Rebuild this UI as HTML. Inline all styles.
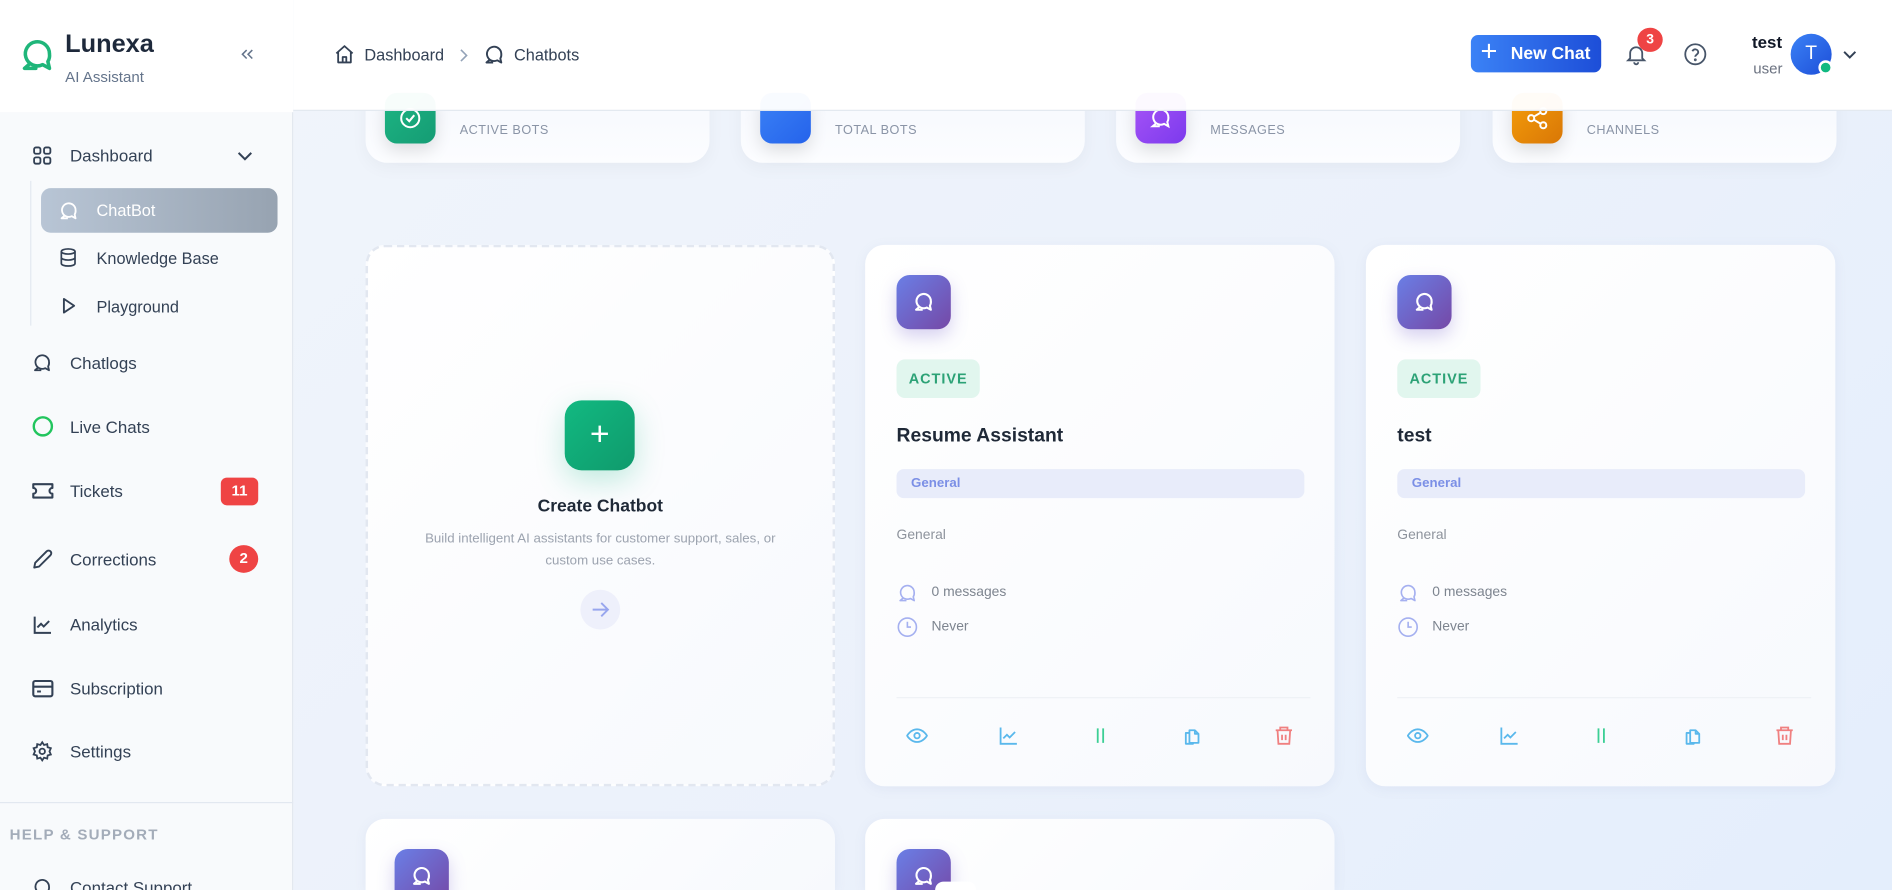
<!DOCTYPE html>
<html><head><meta charset="utf-8">
<style>
*{box-sizing:border-box;margin:0;padding:0}
html,body{width:1892px;height:890px;overflow:hidden;font-family:"Liberation Sans",sans-serif;background:#eef3fb}
#w{position:absolute;left:0;top:0;width:1568px;height:738px;transform:scale(1.20663,1.2060);transform-origin:0 0;background:linear-gradient(135deg,#f1f5fb 0%,#ebf1fb 60%,#e4eefc 100%);overflow:hidden}
.abs{position:absolute}
.sb{position:absolute;left:0;top:0;width:243px;height:738px;background:#f8fafc;border-right:1px solid #e3e8ef}
.sbh{position:absolute;left:0;top:0;width:243px;height:93px;background:#fff}
.txt{position:absolute;white-space:nowrap}
.hdr{position:absolute;left:243px;top:0;width:1325px;height:92px;background:rgba(255,255,255,.97);border-bottom:1px solid #e2e8f0;z-index:5}
.stat{position:absolute;top:50px;height:85px;width:285px;border-radius:18px;background:linear-gradient(180deg,#f3f6fd,#fcfdff);box-shadow:0 4px 14px rgba(0,0,0,.04)}
.sic{position:absolute;left:16px;top:27px;width:42px;height:42px;border-radius:10px;box-shadow:0 6px 14px rgba(0,0,0,.12)}
.slb{position:absolute;left:78px;top:52px;font-size:10.5px;color:#8a94a6;letter-spacing:.4px}
.card{position:absolute;width:389px;border-radius:16px;background:linear-gradient(135deg,#ffffff,#f7f9fd);box-shadow:0 2px 10px rgba(100,120,170,.08)}
.bic{position:absolute;left:26px;top:25px;width:45px;height:45px;border-radius:11px;background:linear-gradient(135deg,#6a7fe6,#7548a6);box-shadow:0 6px 14px rgba(110,90,200,.28)}
.act{position:absolute;left:26px;top:95px;width:69px;height:32px;border-radius:7px;background:#e1f6ee;color:#2ca276;font-size:12px;font-weight:bold;letter-spacing:.8px;text-align:center;line-height:32px}
.ttl{position:absolute;left:26px;top:150px;font-size:16px;font-weight:bold;color:#1f2937}
.tag{position:absolute;left:26px;top:186px;width:338px;height:24px;border-radius:6px;background:#e8ecfa;color:#7b8fe6;font-size:11px;font-weight:bold;line-height:24px;padding-left:12px}
.gd{position:absolute;left:26px;top:235px;font-size:11.5px;color:#8d939c}
.mr{position:absolute;left:26px;font-size:11.5px;color:#7d848f}
.dv{position:absolute;left:26px;right:20px;top:375px;height:1px;background:#eef1f6}
.ai{position:absolute;top:398px}
</style></head><body><div id="w">
<svg width="0" height="0" style="position:absolute"><defs><symbol id="cb" viewBox="0 0 24 24"><path d="M19.5 11a7.5 7.5 0 1 0-4.2 6.7l4.2 2.3-1-4.2A7.4 7.4 0 0 0 19.5 11z"/><path d="M7.5 17L4 20h7"/></symbol></defs></svg>

<!-- sidebar -->
<div class="sb"></div>
<div class="sbh"></div>
<svg class="abs" style="left:15px;top:30px" width="32" height="32" viewBox="0 0 24 24" fill="none" stroke="#1fb67a" stroke-width="2.2" stroke-linecap="round" stroke-linejoin="round"><use href="#cb"/></svg>
<div class="txt" style="left:54px;top:25px;font-size:21px;font-weight:bold;color:#1e293b">Lunexa</div>
<div class="txt" style="left:54px;top:57px;font-size:12.5px;color:#64748b">AI Assistant</div>
<svg class="abs" style="left:198px;top:38px" width="14" height="14" viewBox="0 0 24 24" fill="none" stroke="#64748b" stroke-width="2.2"><path d="M11 6l-6 6 6 6M19 6l-6 6 6 6"/></svg>

<svg class="abs" style="left:26px;top:120px" width="18" height="18" viewBox="0 0 24 24" fill="none" stroke="#334155" stroke-width="2"><rect x="3" y="3" width="7" height="7" rx="2"/><rect x="14" y="3" width="7" height="7" rx="2"/><rect x="3" y="14" width="7" height="7" rx="2"/><rect x="14" y="14" width="7" height="7" rx="2"/></svg>
<div class="txt" style="left:58px;top:121px;font-size:14px;color:#334155">Dashboard</div>
<svg class="abs" style="left:194px;top:120px" width="18" height="18" viewBox="0 0 24 24" fill="none" stroke="#334155" stroke-width="2.2"><path d="M5 9l7 7 7-7"/></svg>
<div class="abs" style="left:25px;top:150px;width:1px;height:120px;background:#e2e8f0"></div>
<div class="abs" style="left:34px;top:156px;width:196px;height:37px;border-radius:8px;background:linear-gradient(90deg,#b8c5d5,#97a3b1)"></div>
<svg class="abs" style="left:48px;top:166px" width="18" height="18" viewBox="0 0 24 24" fill="none" stroke="#fff" stroke-width="2" stroke-linejoin="round"><use href="#cb"/></svg>
<div class="txt" style="left:80px;top:167px;font-size:13.5px;color:#fff">ChatBot</div>
<svg class="abs" style="left:48px;top:205px" width="17" height="17" viewBox="0 0 24 24" fill="none" stroke="#334155" stroke-width="2"><ellipse cx="12" cy="5" rx="8" ry="3"/><path d="M4 5v14c0 1.7 3.6 3 8 3s8-1.3 8-3V5M4 12c0 1.7 3.6 3 8 3s8-1.3 8-3"/></svg>
<div class="txt" style="left:80px;top:207px;font-size:13.5px;color:#334155">Knowledge Base</div>
<svg class="abs" style="left:48px;top:245px" width="17" height="17" viewBox="0 0 24 24" fill="none" stroke="#334155" stroke-width="2.2" stroke-linejoin="round"><path d="M7 4l12 8-12 8z"/></svg>
<div class="txt" style="left:80px;top:247px;font-size:13.5px;color:#334155">Playground</div>

<svg class="abs" style="left:26px;top:292px" width="18" height="18" viewBox="0 0 24 24" fill="none" stroke="#334155" stroke-width="2" stroke-linejoin="round"><use href="#cb"/></svg>
<div class="txt" style="left:58px;top:293px;font-size:14px;color:#334155">Chatlogs</div>
<div class="abs" style="left:27px;top:345px;width:17px;height:17px;border:2px solid #22c55e;border-radius:50%"></div>
<div class="txt" style="left:58px;top:346px;font-size:14px;color:#334155">Live Chats</div>
<svg class="abs" style="left:26px;top:399px" width="19" height="16" viewBox="0 0 24 20" fill="none" stroke="#334155" stroke-width="2.2" stroke-linejoin="round"><path d="M2 3h20v4a3 3 0 0 0 0 6v4H2v-4a3 3 0 0 0 0-6z"/></svg>
<div class="txt" style="left:58px;top:399px;font-size:14px;color:#334155">Tickets</div>
<div class="abs" style="left:183px;top:396px;width:31px;height:23px;border-radius:5px;background:#ef4444;color:#fff;font-size:12.5px;font-weight:bold;text-align:center;line-height:23px">11</div>
<svg class="abs" style="left:26px;top:454px" width="19" height="19" viewBox="0 0 24 24" fill="none" stroke="#334155" stroke-width="2" stroke-linejoin="round"><path d="M3 21l1-5L16 4a2.8 2.8 0 0 1 4 4L8 20z"/></svg>
<div class="txt" style="left:58px;top:456px;font-size:14px;color:#334155">Corrections</div>
<div class="abs" style="left:190px;top:452px;width:24px;height:23px;border-radius:50%;background:#ef4444;color:#fff;font-size:12.5px;font-weight:bold;text-align:center;line-height:23px">2</div>
<svg class="abs" style="left:26px;top:509px" width="19" height="18" viewBox="0 0 24 24" fill="none" stroke="#334155" stroke-width="2.2"><path d="M3 3v18h18"/><path d="M6 15l4-4 3 3 6-6"/></svg>
<div class="txt" style="left:58px;top:510px;font-size:14px;color:#334155">Analytics</div>
<svg class="abs" style="left:26px;top:563px" width="19" height="16" viewBox="0 0 24 20" fill="none" stroke="#334155" stroke-width="2.2"><rect x="2" y="2" width="20" height="16" rx="2"/><path d="M2 8h20M6 13h4"/></svg>
<div class="txt" style="left:58px;top:563px;font-size:14px;color:#334155">Subscription</div>
<svg class="abs" style="left:26px;top:614px" width="18" height="18" viewBox="0 0 24 24" fill="none" stroke="#334155" stroke-width="2"><circle cx="12" cy="12" r="3"/><path d="M12 2l2 3 3.5-1 .5 3.5 3.5 1-1.5 3.5 1.5 3.5-3.5 1-.5 3.5-3.5-1-2 3-2-3-3.5 1-.5-3.5-3.5-1L4 12 2.5 8.5l3.5-1L6.5 4 10 5z"/></svg>
<div class="txt" style="left:58px;top:615px;font-size:14px;color:#334155">Settings</div>
<div class="abs" style="left:0;top:665px;width:243px;height:1px;background:#e2e8f0"></div>
<div class="txt" style="left:8px;top:685px;font-size:12.5px;font-weight:bold;color:#a3acb9;letter-spacing:1px">HELP &amp; SUPPORT</div>
<svg class="abs" style="left:26px;top:727px" width="18" height="18" viewBox="0 0 24 24" fill="none" stroke="#334155" stroke-width="2"><use href="#cb"/></svg>
<div class="txt" style="left:58px;top:728px;font-size:14px;color:#334155">Contact Support</div>

<!-- stat cards -->
<div class="stat" style="left:303px"><div class="sic" style="background:linear-gradient(135deg,#1db583,#159c74)"><svg style="position:absolute;left:11px;top:11px" width="20" height="20" viewBox="0 0 24 24" fill="none" stroke="#fff" stroke-width="2"><circle cx="12" cy="12" r="9"/><path d="M8 12l3 3 5-6"/></svg></div><div class="slb">ACTIVE BOTS</div></div>
<div class="stat" style="left:614px"><div class="sic" style="background:linear-gradient(135deg,#3b82f6,#2563eb)"></div><div class="slb">TOTAL BOTS</div></div>
<div class="stat" style="left:925px"><div class="sic" style="background:linear-gradient(135deg,#a855f7,#7c3aed)"><svg style="position:absolute;left:11px;top:11px" width="20" height="20" viewBox="0 0 24 24" fill="none" stroke="#fff" stroke-width="2"><use href="#cb"/></svg></div><div class="slb">MESSAGES</div></div>
<div class="stat" style="left:1237px"><div class="sic" style="background:linear-gradient(135deg,#f59e0b,#d97706)"><svg style="position:absolute;left:11px;top:11px" width="20" height="20" viewBox="0 0 24 24" fill="none" stroke="#fff" stroke-width="2"><circle cx="18" cy="5" r="3"/><circle cx="6" cy="12" r="3"/><circle cx="18" cy="19" r="3"/><path d="M8.6 13.5l6.8 4M15.4 6.5l-6.8 4"/></svg></div><div class="slb">CHANNELS</div></div>

<!-- header -->
<div class="hdr">
<svg class="abs" style="left:33px;top:36px" width="19" height="18" viewBox="0 0 24 24" fill="none" stroke="#334155" stroke-width="2" stroke-linejoin="round"><path d="M3 11l9-8 9 8M5 9v12h14V9M10 21v-6h4v6"/></svg>
<div class="txt" style="left:59px;top:38px;font-size:13.5px;color:#334155">Dashboard</div>
<svg class="abs" style="left:133px;top:37px" width="16" height="18" viewBox="0 0 24 24" fill="none" stroke="#94a3b8" stroke-width="2"><path d="M9 5l7 7-7 7"/></svg>
<svg class="abs" style="left:157px;top:36px" width="19" height="19" viewBox="0 0 24 24" fill="none" stroke="#334155" stroke-width="2" stroke-linejoin="round"><use href="#cb"/></svg>
<div class="txt" style="left:183px;top:38px;font-size:13.5px;color:#334155">Chatbots</div>
<div class="abs" style="left:976px;top:29px;width:108px;height:31px;border-radius:6px;background:linear-gradient(90deg,#3b82f6,#1d4ed8)"></div>
<div class="txt" style="left:984px;top:28px;font-size:24px;color:#fff;line-height:30px">+</div>
<div class="txt" style="left:1009px;top:37px;font-size:14.5px;font-weight:bold;color:#fff">New Chat</div>
<svg class="abs" style="left:1103px;top:35px" width="20" height="20" viewBox="0 0 24 24" fill="none" stroke="#475569" stroke-width="1.8"><path d="M6 16V11a6 6 0 0 1 12 0v5l2 2H4zM10 20a2 2 0 0 0 4 0"/></svg>
<div class="abs" style="left:1114px;top:23px;width:21px;height:20px;border-radius:50%;background:#ef4444;color:#fff;font-size:11.5px;font-weight:bold;text-align:center;line-height:20px">3</div>
<svg class="abs" style="left:1152px;top:35px" width="20" height="20" viewBox="0 0 24 24" fill="none" stroke="#475569" stroke-width="1.8"><circle cx="12" cy="12" r="10"/><path d="M9.1 9a3 3 0 0 1 5.8 1c0 2-3 2.5-3 4.5"/><circle cx="12" cy="17.5" r=".5" fill="#475569"/></svg>
<div class="abs" style="left:1190px;top:17px;width:125px;height:72px;border-radius:14px;background:#fff"></div>
<div class="txt" style="left:1209px;top:27px;font-size:14px;font-weight:bold;color:#111827">test</div>
<div class="txt" style="left:1210px;top:50px;font-size:12.5px;color:#6b7280">user</div>
<div class="abs" style="left:1241px;top:28px;width:34px;height:34px;border-radius:50%;background:linear-gradient(135deg,#3b82f6,#1d4ed8);color:#fff;font-size:16px;text-align:center;line-height:34px">T</div>
<div class="abs" style="left:1264px;top:50px;width:12px;height:12px;border-radius:50%;background:#10b981;border:2px solid #fff"></div>
<svg class="abs" style="left:1282px;top:37px" width="16" height="16" viewBox="0 0 24 24" fill="none" stroke="#334155" stroke-width="2.4"><path d="M5 9l7 7 7-7"/></svg>
</div>

<!-- create card -->
<div class="card" style="left:303px;top:203px;height:449px;border:2px dashed #e2e7f0;box-shadow:none">
<div class="abs" style="left:163px;top:127px;width:58px;height:58px;border-radius:14px;background:linear-gradient(135deg,#12b981,#0f9a6c);box-shadow:0 8px 24px rgba(16,185,129,.25)"></div>
<div class="txt" style="left:163px;top:137px;width:58px;text-align:center;font-size:28px;color:#fff;line-height:36px">+</div>
<div class="txt" style="left:0;width:385px;top:207px;text-align:center;font-size:14.5px;font-weight:bold;color:#1f2937">Create Chatbot</div>
<div class="abs" style="left:30px;width:325px;top:233px;text-align:center;font-size:11px;line-height:18px;color:#9ca3af">Build intelligent AI assistants for customer support, sales, or custom use cases.</div>
<div class="abs" style="left:176px;top:284px;width:33px;height:33px;border-radius:50%;background:#eef0fb"></div>
<svg class="abs" style="left:183px;top:291px" width="19" height="19" viewBox="0 0 24 24" fill="none" stroke="#98a6ee" stroke-width="2"><path d="M4 12h16M13 5l7 7-7 7"/></svg>
</div>

<!-- bot cards -->
<div class="card" style="left:717px;top:203px;height:449px">
<div class="bic"><svg style="position:absolute;left:13px;top:13px" width="19" height="19" viewBox="0 0 24 24" fill="none" stroke="#fff" stroke-width="2.2" stroke-linejoin="round"><use href="#cb"/></svg></div>
<div class="act">ACTIVE</div>
<div class="ttl">Resume Assistant</div>
<div class="tag">General</div>
<div class="gd">General</div>
<svg class="abs" style="left:26px;top:280px" width="18" height="18" viewBox="0 0 24 24" fill="none" stroke="#a5b0f0" stroke-width="1.8" stroke-linejoin="round"><use href="#cb"/></svg>
<div class="mr" style="left:55px;top:282px">0 messages</div>
<svg class="abs" style="left:26px;top:308px" width="18" height="18" viewBox="0 0 24 24" fill="none" stroke="#a5b0f0" stroke-width="1.8"><circle cx="12" cy="12" r="10"/><path d="M12 6v6h4"/></svg>
<div class="mr" style="left:55px;top:311px">Never</div>
<div class="dv"></div>
<svg class="ai" style="left:34px" width="18" height="18" viewBox="0 0 24 24" fill="none" stroke="#5ab8ec" stroke-width="2"><path d="M1 12s4-7 11-7 11 7 11 7-4 7-11 7S1 12 1 12z"/><circle cx="12" cy="12" r="3"/></svg>
<svg class="ai" style="left:110px" width="18" height="18" viewBox="0 0 24 24" fill="none" stroke="#5ab8ec" stroke-width="2"><path d="M3 3v18h18"/><path d="M6 15l4-4 3 3 6-6"/></svg>
<svg class="ai" style="left:186px" width="18" height="18" viewBox="0 0 24 24" fill="none" stroke="#3ccf95" stroke-width="2"><path d="M9 4v16M15 4v16"/></svg>
<svg class="ai" style="left:262px" width="18" height="18" viewBox="0 0 24 24" fill="none" stroke="#5ab8ec" stroke-width="2" stroke-linejoin="round"><path d="M9 6h6l4 4v10H9z"/><path d="M15 6v4h4M9 9H5v12h8v-1"/></svg>
<svg class="ai" style="left:338px" width="18" height="18" viewBox="0 0 24 24" fill="none" stroke="#f08080" stroke-width="2"><path d="M3 6h18M8 6V3h8v3M5 6l1 15h12l1-15M10 11v6M14 11v6"/></svg>
</div>

<div class="card" style="left:1132px;top:203px;height:449px">
<div class="bic"><svg style="position:absolute;left:13px;top:13px" width="19" height="19" viewBox="0 0 24 24" fill="none" stroke="#fff" stroke-width="2.2" stroke-linejoin="round"><use href="#cb"/></svg></div>
<div class="act">ACTIVE</div>
<div class="ttl">test</div>
<div class="tag">General</div>
<div class="gd">General</div>
<svg class="abs" style="left:26px;top:280px" width="18" height="18" viewBox="0 0 24 24" fill="none" stroke="#a5b0f0" stroke-width="1.8" stroke-linejoin="round"><use href="#cb"/></svg>
<div class="mr" style="left:55px;top:282px">0 messages</div>
<svg class="abs" style="left:26px;top:308px" width="18" height="18" viewBox="0 0 24 24" fill="none" stroke="#a5b0f0" stroke-width="1.8"><circle cx="12" cy="12" r="10"/><path d="M12 6v6h4"/></svg>
<div class="mr" style="left:55px;top:311px">Never</div>
<div class="dv"></div>
<svg class="ai" style="left:34px" width="18" height="18" viewBox="0 0 24 24" fill="none" stroke="#5ab8ec" stroke-width="2"><path d="M1 12s4-7 11-7 11 7 11 7-4 7-11 7S1 12 1 12z"/><circle cx="12" cy="12" r="3"/></svg>
<svg class="ai" style="left:110px" width="18" height="18" viewBox="0 0 24 24" fill="none" stroke="#5ab8ec" stroke-width="2"><path d="M3 3v18h18"/><path d="M6 15l4-4 3 3 6-6"/></svg>
<svg class="ai" style="left:186px" width="18" height="18" viewBox="0 0 24 24" fill="none" stroke="#3ccf95" stroke-width="2"><path d="M9 4v16M15 4v16"/></svg>
<svg class="ai" style="left:262px" width="18" height="18" viewBox="0 0 24 24" fill="none" stroke="#5ab8ec" stroke-width="2" stroke-linejoin="round"><path d="M9 6h6l4 4v10H9z"/><path d="M15 6v4h4M9 9H5v12h8v-1"/></svg>
<svg class="ai" style="left:338px" width="18" height="18" viewBox="0 0 24 24" fill="none" stroke="#f08080" stroke-width="2"><path d="M3 6h18M8 6V3h8v3M5 6l1 15h12l1-15M10 11v6M14 11v6"/></svg>
</div>

<div class="card" style="left:303px;top:679px;height:59px;border-radius:16px 16px 0 0"><div class="bic" style="left:24px"><svg style="position:absolute;left:13px;top:13px" width="19" height="19" viewBox="0 0 24 24" fill="none" stroke="#fff" stroke-width="2.2" stroke-linejoin="round"><use href="#cb"/></svg></div></div>
<div class="card" style="left:717px;top:679px;height:59px;border-radius:16px 16px 0 0"><div class="bic"><svg style="position:absolute;left:13px;top:13px" width="19" height="19" viewBox="0 0 24 24" fill="none" stroke="#fff" stroke-width="2.2" stroke-linejoin="round"><use href="#cb"/></svg></div><div class="abs" style="left:58px;top:52px;width:34px;height:7px;border-radius:17px 17px 0 0;background:#fff"></div></div>

</div></body></html>
